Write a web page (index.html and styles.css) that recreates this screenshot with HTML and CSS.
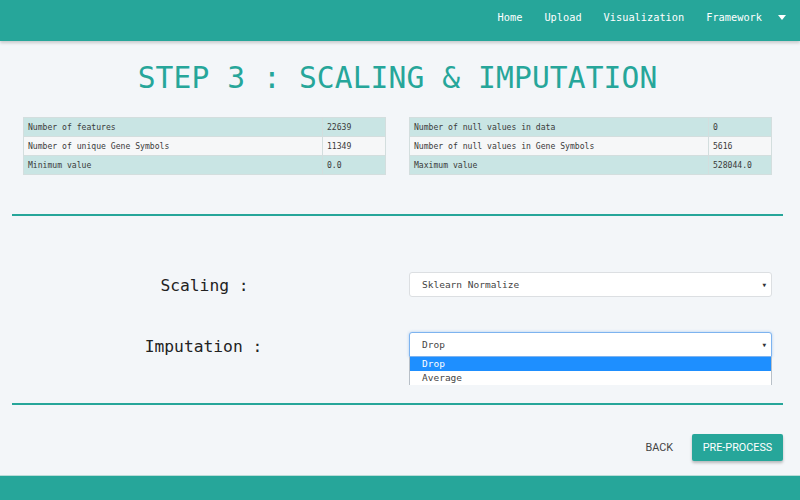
FILE: index.html
```html
<!DOCTYPE html>
<html>
<head>
<meta charset="utf-8">
<link rel="stylesheet" href="styles.css">
</head>
<body>
<nav class="nav">
  <a class="nav-link">Home</a>
  <a class="nav-link">Upload</a>
  <a class="nav-link">Visualization</a>
  <a class="nav-link">Framework</a>
  <span class="nav-caret"></span>
</nav>
<main class="main">
  <h1 class="title">STEP 3 : SCALING &amp; IMPUTATION</h1>
  <div class="stats">
    <table class="stat-table">
      <tr class="tinted"><td class="k">Number of features</td><td class="v">22639</td></tr>
      <tr><td class="k">Number of unique Gene Symbols</td><td class="v">11349</td></tr>
      <tr class="tinted"><td class="k">Minimum value</td><td class="v">0.0</td></tr>
    </table>
    <table class="stat-table">
      <tr class="tinted"><td class="k">Number of null values in data</td><td class="v">0</td></tr>
      <tr><td class="k">Number of null values in Gene Symbols</td><td class="v">5616</td></tr>
      <tr class="tinted"><td class="k">Maximum value</td><td class="v">528044.0</td></tr>
    </table>
  </div>
  <hr class="rule rule-top">
  <div class="form">
    <div class="form-row">
      <label class="form-label">Scaling :</label>
      <div class="select"><span>Sklearn Normalize</span><span class="arrow">▼</span></div>
    </div>
    <div class="form-row row-imp">
      <label class="form-label">Imputation :</label>
      <div class="select-wrap">
        <div class="select focused"><span>Drop</span><span class="arrow">▼</span></div>
        <ul class="options">
          <li class="opt active">Drop</li>
          <li class="opt">Average</li>
        </ul>
      </div>
    </div>
  </div>
  <hr class="rule rule-bottom">
  <div class="actions">
    <button class="btn-flat">BACK</button>
    <button class="btn">PRE-PROCESS</button>
  </div>
</main>
<footer class="footer"></footer>
</body>
</html>
```
FILE: styles.css
```css
* { box-sizing: border-box; }
html, body { margin: 0; padding: 0; }
body {
  width: 800px;
  height: 500px;
  overflow: hidden;
  background: #f3f6f9;
  font-family: "DejaVu Sans Mono", "Liberation Mono", monospace;
  color: #333;
  display: flex;
  flex-direction: column;
}
.nav {
  height: 41px;
  background: #26a69a;
  display: flex;
  align-items: center;
  justify-content: flex-end;
  padding-right: 14px;
  box-shadow: 0 2px 3px rgba(0,0,0,0.18);
  position: relative;
  z-index: 2;
  flex-shrink: 0;
}
.nav-link {
  color: #fff;
  font-size: 10.3px;
  padding: 0 11px;
  margin-top: -7px;
}
.nav-caret {
  width: 0; height: 0;
  border-left: 4.5px solid transparent;
  border-right: 4.5px solid transparent;
  border-top: 5px solid #fff;
  margin-left: 5px;
  margin-top: -7px;
}
.main {
  flex: 1;
  padding: 0 17px 0 12px;
}
.title {
  margin: 19px 0 0;
  text-align: center;
  font-weight: normal;
  font-size: 29.6px;
  line-height: 36px;
  color: #26a69a;
  letter-spacing: 0.1px;
}
.stats {
  display: grid;
  grid-template-columns: 363px 363px;
  column-gap: 23px;
  padding: 0 11px;
  margin-top: 21px;
}
.stat-table {
  border-collapse: collapse;
  width: 363px;
  font-size: 8.1px;
}
.stat-table td {
  border: 1px solid #d3dede;
  height: 19px;
  padding: 0 4px;
  background: #f6f7f8;
  color: #3a3a3a;
}
.stat-table tr.tinted td { background: #c9e5e4; }
.stat-table td.k { width: 299px; }
.rule {
  border: 0;
  height: 2px;
  background: #26a69a;
  margin: 0;
}
.rule-top { margin-top: 39px; }
.form {
  padding: 0 11px;
}
.form-row {
  display: grid;
  grid-template-columns: 363px 363px;
  column-gap: 23px;
  align-items: center;
  margin-top: 56px;
}
.form-row.row-imp { margin-top: 35px; }
.form-label {
  text-align: center;
  font-size: 16.3px;
  color: #222;
  padding-left: 0;
  margin-top: 2px;
}
.row-imp .form-label { margin-top: 3px; padding-right: 2px; }
.select {
  height: 25px;
  background: #fff;
  border: 1px solid #dcdfe2;
  border-radius: 3px;
  display: flex;
  align-items: center;
  justify-content: space-between;
  padding: 0 5px 0 12px;
  font-size: 9.5px;
  color: #444;
}
.select .arrow {
  font-size: 6px;
  color: #333;
}
.select-wrap { position: relative; }
.select.focused {
  border-color: #7db3ef;
  box-shadow: 0 0 3px rgba(80,150,230,0.45);
  border-radius: 3px 3px 0 0;
}
.options {
  position: absolute;
  left: 0; right: 0;
  top: 25px;
  margin: 0;
  padding: 0;
  list-style: none;
  background: #fff;
  border-right: 1px solid #b8c0c8;
  border-left: 1px solid #b8c0c8;
  z-index: 3;
}
.opt {
  height: 14px;
  line-height: 14px;
  padding-left: 12px;
  font-size: 9.5px;
  color: #444;
}
.opt.active { background: #1e8fff; color: #fff; }
.rule-bottom { margin-top: 46px; }
.actions {
  display: flex;
  justify-content: flex-end;
  align-items: center;
  margin-top: 29px;
}
.btn-flat, .btn {
  font-family: Roboto, "Liberation Sans", sans-serif;
  font-size: 10.8px;
  border: 0;
  cursor: pointer;
}
.btn-flat {
  background: transparent;
  color: #444;
  padding: 0;
  margin-right: 19px;
}
.btn {
  background: #26a69a;
  color: #fff;
  width: 91px;
  height: 27px;
  padding: 0;
  border-radius: 2px;
  box-shadow: 0 2px 3px rgba(0,0,0,0.25);
}
.footer {
  height: 25px;
  background: #26a69a;
  border-top: 1px solid #b9dcd8;
  flex-shrink: 0;
}
```
